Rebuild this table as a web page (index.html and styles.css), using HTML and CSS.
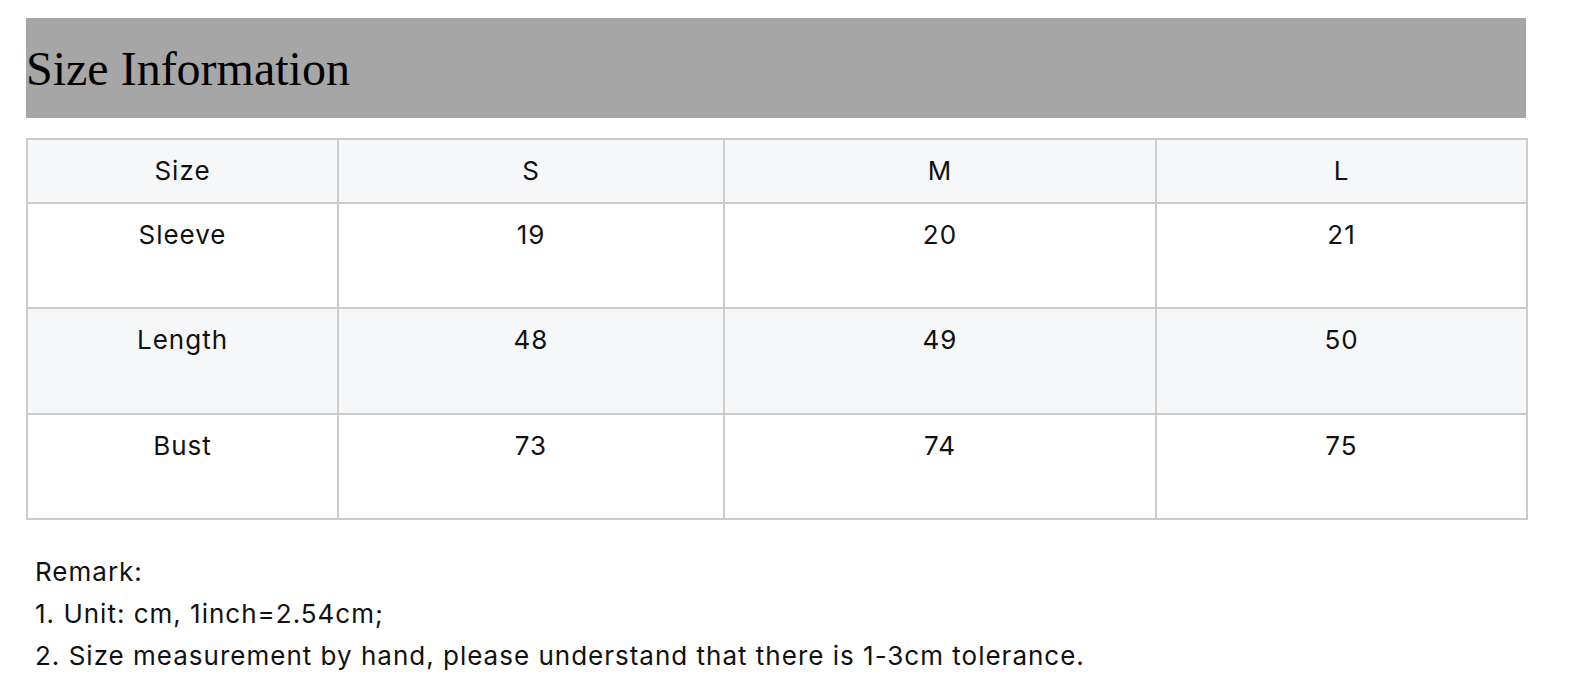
FILE: index.html
```html
<!DOCTYPE html>
<html lang="en">
<head>
<meta charset="utf-8">
<title>Size Information</title>
<link rel="stylesheet" href="styles.css">
</head>
<body>
<div class="page">
  <div class="title-bar">Size Information</div>
  <table class="size-table">
    <colgroup>
      <col class="c1"><col class="c2"><col class="c3"><col class="c4">
    </colgroup>
    <thead>
      <tr><th>Size</th><th>S</th><th>M</th><th>L</th></tr>
    </thead>
    <tbody>
      <tr><td>Sleeve</td><td>19</td><td>20</td><td>21</td></tr>
      <tr><td>Length</td><td>48</td><td>49</td><td>50</td></tr>
      <tr><td>Bust</td><td>73</td><td>74</td><td>75</td></tr>
    </tbody>
  </table>
  <div class="remark">
    <p>Remark:</p>
    <p>1. Unit: cm, 1inch=2.54cm;</p>
    <p>2. Size measurement by hand, please understand that there is 1-3cm tolerance.</p>
  </div>
</div>
</body>
</html>
```

FILE: styles.css
```css
html, body {
  margin: 0;
  padding: 0;
  background: #ffffff;
}

.page {
  width: 1500px;
  margin-left: 26px;
  padding-top: 18px;
}

.title-bar {
  background: #a6a6a6;
  color: #000;
  font-family: "Liberation Serif", "Times New Roman", serif;
  font-size: 48px;
  line-height: 55px;
  padding: 23px 0 22px;
}

.size-table {
  margin-top: 20px;
  width: 1500px;
  border-collapse: collapse;
  table-layout: fixed;
  font-family: Inter, "Noto Sans", sans-serif;
  font-size: 26px;
  line-height: 41.6px;
  letter-spacing: 1px;
  color: #111;
}

.size-table .c1 { width: 311px; }
.size-table .c2 { width: 386px; }
.size-table .c3 { width: 432px; }
.size-table .c4 { width: 371px; }

.size-table th,
.size-table td {
  border: 2px solid #cccccc;
  text-align: center;
  vertical-align: top;
  font-weight: 400;
}

.size-table th {
  background: #f6f7f9;
  padding: 10px 10px;
}

.size-table td {
  padding: 10px 10px 52px;
}

.size-table tbody tr:nth-child(even) td {
  background: #f6f7f9;
}

.remark {
  margin-top: 31px;
  padding-left: 9px;
  font-family: Inter, "Noto Sans", sans-serif;
  font-size: 26px;
  line-height: 41.6px;
  letter-spacing: 1px;
  color: #111;
}

.remark p {
  margin: 0;
}
```
